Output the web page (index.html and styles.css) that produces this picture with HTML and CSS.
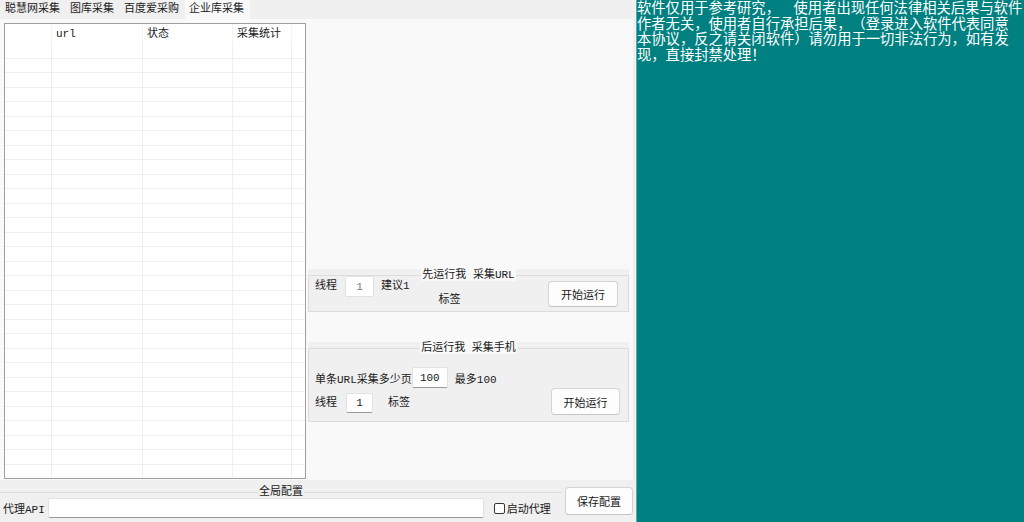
FILE: index.html
```html
<!DOCTYPE html>
<html lang="zh-CN">
<head>
<meta charset="utf-8">
<title>企业库采集</title>
<link rel="stylesheet" href="styles.css">
</head>
<body>
<div class="app">
  <div class="main">
    <div class="tabs">
      <div class="tab">聪慧网采集</div>
      <div class="tab">图库采集</div>
      <div class="tab">百度爱采购</div>
      <div class="tab active">企业库采集</div>
    </div>
    <div class="page">
      <div class="grid">
        <div class="row head"><span></span><span class="mono">url</span><span>状态</span><span>采集统计</span><span></span></div>
        <div class="row"><span></span><span></span><span></span><span></span><span></span></div>
        <div class="row"><span></span><span></span><span></span><span></span><span></span></div>
        <div class="row"><span></span><span></span><span></span><span></span><span></span></div>
        <div class="row"><span></span><span></span><span></span><span></span><span></span></div>
        <div class="row"><span></span><span></span><span></span><span></span><span></span></div>
        <div class="row"><span></span><span></span><span></span><span></span><span></span></div>
        <div class="row"><span></span><span></span><span></span><span></span><span></span></div>
        <div class="row"><span></span><span></span><span></span><span></span><span></span></div>
        <div class="row"><span></span><span></span><span></span><span></span><span></span></div>
        <div class="row"><span></span><span></span><span></span><span></span><span></span></div>
        <div class="row"><span></span><span></span><span></span><span></span><span></span></div>
        <div class="row"><span></span><span></span><span></span><span></span><span></span></div>
        <div class="row"><span></span><span></span><span></span><span></span><span></span></div>
        <div class="row"><span></span><span></span><span></span><span></span><span></span></div>
        <div class="row"><span></span><span></span><span></span><span></span><span></span></div>
        <div class="row"><span></span><span></span><span></span><span></span><span></span></div>
        <div class="row"><span></span><span></span><span></span><span></span><span></span></div>
        <div class="row"><span></span><span></span><span></span><span></span><span></span></div>
        <div class="row"><span></span><span></span><span></span><span></span><span></span></div>
        <div class="row"><span></span><span></span><span></span><span></span><span></span></div>
        <div class="row"><span></span><span></span><span></span><span></span><span></span></div>
        <div class="row"><span></span><span></span><span></span><span></span><span></span></div>
        <div class="row"><span></span><span></span><span></span><span></span><span></span></div>
        <div class="row"><span></span><span></span><span></span><span></span><span></span></div>
        <div class="row"><span></span><span></span><span></span><span></span><span></span></div>
        <div class="row"><span></span><span></span><span></span><span></span><span></span></div>
        <div class="row"><span></span><span></span><span></span><span></span><span></span></div>
        <div class="row"><span></span><span></span><span></span><span></span><span></span></div>
        <div class="row"><span></span><span></span><span></span><span></span><span></span></div>
        <div class="row"><span></span><span></span><span></span><span></span><span></span></div>
        <div class="row"><span></span><span></span><span></span><span></span><span></span></div>
      </div>
      <div class="side">
        <div class="group g1">
          <div class="legend"><span>先运行我 采集URL</span></div>
          <div class="frame">
            <div class="g1-row">
              <span class="lbl l-thread">线程</span>
              <input class="tb tb-a dim" value="1">
              <span class="lbl l-hint">建议1</span>
              <span class="lbl l-tag">标签</span>
              <button class="btn b1">开始运行</button>
            </div>
          </div>
        </div>
        <div class="group g2">
          <div class="legend"><span>后运行我 采集手机</span></div>
          <div class="frame">
            <div class="g2-row1">
              <span class="lbl l-pages">单条URL采集多少页</span>
              <input class="tb tb-b" value="100">
              <span class="lbl l-max">最多100</span>
            </div>
            <div class="g2-row2">
              <span class="lbl l-thread2">线程</span>
              <input class="tb tb-c" value="1">
              <span class="lbl l-tag2">标签</span>
              <button class="btn b2">开始运行</button>
            </div>
          </div>
        </div>
      </div>
    </div>
    <div class="bottom">
      <div class="gbox">
        <div class="legend"><span>全局配置</span></div>
        <div class="frame">
          <div class="prow">
            <span class="lbl l-api">代理API</span>
            <input class="tb tb-api" value="">
            <input type="checkbox" class="chk">
            <span class="lbl l-chk">启动代理</span>
          </div>
        </div>
      </div>
      <button class="btn save">保存配置</button>
    </div>
  </div>
  <div class="notice">软件仅用于参考研究， 使用者出现任何法律相关后果与软件<br>作者无关，使用者自行承担后果，（登录进入软件代表同意<br>本协议，反之请关闭软件）请勿用于一切非法行为，如有发<br>现，直接封禁处理！</div>
</div>
</body>
</html>
```

FILE: styles.css
```css
* { box-sizing: border-box; }

body {
  margin: 0;
  background: #f0f0f0;
  color: #1a1a1a;
  font: 11px "Liberation Mono", "Noto Sans CJK SC", monospace;
}

.app {
  display: flex;
  width: 1024px;
  height: 522px;
  overflow: hidden;
}

.main {
  width: 633px;
  display: flex;
  flex-direction: column;
}

/* tabs */
.tabs {
  height: 19px;
  display: flex;
  gap: 2px;
  padding-left: 1px;
  background: #f0f0f0;
}
.tab {
  height: 19px;
  line-height: 19px;
  padding: 0 4px;
  white-space: nowrap;
}
.tab.active {
  background: #f9f9f9;
  padding-right: 6px;
}

/* page */
.page {
  height: 461px;
  background: #f9f9f9;
  display: flex;
  padding: 4px 0 0 4px;
}

.grid {
  width: 302px;
  height: 456px;
  border: 1px solid #a0a0a0;
  background: #fff;
  overflow: hidden;
  flex: none;
}
.row {
  display: grid;
  grid-template-columns: 47px 91px 90px 59px 1fr;
  height: 14.5px;
  border-bottom: 1px solid #efefef;
}
.row span {
  border-right: 1px solid #efefef;
}
.row span:last-child { border-right: none; }
.row.head {
  height: 20px;
  border-bottom: none;
}
.row.head span {
  border-right-color: #f5f5f5;
  line-height: 21px;
  padding-left: 4px;
  white-space: nowrap;
}

/* side groups */
.side {
  width: 321px;
  margin-left: 2px;
  padding-top: 246px;
  display: flex;
  flex-direction: column;
}

.group {
  background: #f0f0f0;
}
.legend {
  display: flex;
  justify-content: center;
  height: 12px;
  line-height: 12px;
  white-space: nowrap;
}
.legend span {
  background: #f9f9f9;
  padding: 0 1px;
}
.frame {
  margin-top: -6px;
  border: 1px solid #dcdcdc;
}

.lbl { white-space: nowrap; }

.tb {
  font: inherit;
  color: #1a1a1a;
  background: #fff;
  border: 1px solid #e2e2e2;
  border-bottom-color: #9a9a9a;
  border-radius: 2px;
  padding: 0;
  margin: 0;
  text-align: center;
  outline: none;
}
.tb.dim {
  color: #7a7a7a;
  border-bottom-color: #e2e2e2;
}

.btn {
  font: inherit;
  color: #1a1a1a;
  background: #fdfdfd;
  border: 1px solid #d3d3d3;
  border-bottom-color: #c4c4c4;
  border-radius: 4px;
  padding: 0;
  margin: 0;
}

/* group 1 */
.g1-row {
  height: 35px;
  display: flex;
  align-items: flex-start;
}
.l-thread { margin-left: 6px; line-height: 21px; }
.tb-a { width: 29px; height: 21px; margin-left: 8px; }
.l-hint { margin-left: 7px; line-height: 21px; }
.l-tag { margin-left: 29px; margin-top: 17px; line-height: 14px; }
.b1 { width: 70px; height: 26px; margin: 5px 10px 0 auto; }

/* group 2 */
.g2 { margin-top: 30px; }
.g2 .frame { padding: 18px 0 6px; }
.g2-row1 {
  height: 21px;
  display: flex;
  align-items: center;
}
.l-pages { margin-left: 6px; }
.tb-b { width: 36px; height: 21px; margin-left: 0; }
.l-max { margin-left: 7px; }
.g2-row2 {
  height: 27px;
  display: flex;
  align-items: flex-start;
}
.l-thread2 { margin-left: 6px; margin-top: 5px; line-height: 20px; }
.tb-c { width: 27px; height: 20px; margin-left: 9px; margin-top: 5px; }
.l-tag2 { margin-left: 15px; margin-top: 5px; line-height: 20px; }
.b2 { width: 69px; height: 27px; margin: 0 8px 0 auto; }

/* bottom */
.bottom {
  height: 42px;
  display: flex;
  background: #f0f0f0;
}
.gbox {
  width: 562px;
  padding-top: 6px;
}
.gbox .legend span { background: #f0f0f0; }
.gbox .frame {
  border: none;
  border-top: 1px solid #dcdcdc;
}
.prow {
  display: flex;
  align-items: center;
  padding-top: 5px;
  height: 25px;
}
.l-api { margin-left: 3px; }
.tb-api { width: 436px; height: 20px; margin-left: 3px; }
.chk {
  appearance: none;
  -webkit-appearance: none;
  width: 11px;
  height: 11px;
  margin: 0 0 0 10px;
  border: 1px solid #333;
  border-radius: 2px;
  background: #fff;
}
.l-chk { margin-left: 2px; }
.save {
  width: 68px;
  height: 28px;
  margin: 7px 0 0 3px;
}

/* notice */
.notice {
  flex: 1;
  margin-left: 3px;
  background: #008080;
  border-left: 1px solid #5fa9a9;
  color: #fff;
  font: 14.3px/15.5px "Liberation Mono", "Noto Sans CJK SC", monospace;
  text-spacing-trim: space-all;
  word-spacing: 5px;
  padding-top: 2px;
  white-space: pre;
  overflow: hidden;
}
```
